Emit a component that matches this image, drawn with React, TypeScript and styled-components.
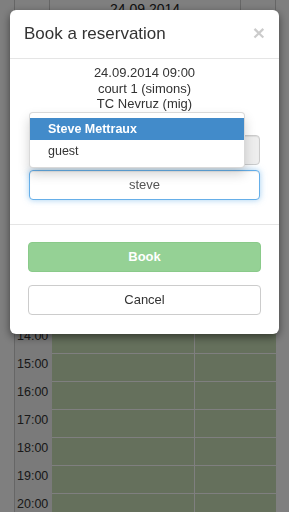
import React from 'react';
import styled, { createGlobalStyle } from 'styled-components';

const GlobalStyle = createGlobalStyle`
  html, body {
    margin: 0;
    padding: 0;
    background: #ffffff;
    font-family: "Liberation Sans", Arial, Helvetica, sans-serif;
    color: #333333;
  }
`;

const Page = styled.div`
  padding: 0 14px;
  height: 512px;
  overflow: hidden;
`;

const Schedule = styled.div`
  border-left: 1px solid #cccccc;
  width: 261px;
`;

const NavBar = styled.div`
  display: flex;
  height: 45px;
`;

const NavCell = styled.div<{ $width?: number; $muted?: boolean; $strong?: boolean }>`
  ${(p) => (p.$width ? `width: ${p.$width}px;` : 'flex: 1;')}
  border-right: 1px solid #cccccc;
  text-align: center;
  padding-top: 2px;
  font-size: 14px;
  line-height: 14px;
  color: ${(p) => (p.$muted ? '#bbbbbb' : '#222222')};
  font-weight: ${(p) => (p.$strong ? 'bold' : 'normal')};
`;

const CourtHead = styled.div`
  height: 56px;
`;

const Row = styled.div`
  display: grid;
  grid-template-columns: 37px 143px 1fr;
  height: 28px;
`;

const TimeCell = styled.div`
  background: #f4f4f4;
  font-size: 12.5px;
  line-height: 18px;
  padding: 2px 0 0 2px;
  color: #333333;
`;

const Slot = styled.div<{ $last?: boolean }>`
  background: #cae0b8;
  border-top: 1px solid #ffffff;
  ${(p) => (p.$last ? '' : 'border-right: 1px solid #ffffff;')}
`;

const Backdrop = styled.div`
  position: fixed;
  inset: 0;
  background: rgba(0, 0, 0, 0.5);
`;

const Modal = styled.div`
  position: fixed;
  top: 10px;
  left: 10px;
  right: 10px;
  background: #ffffff;
  border-radius: 6px;
  box-shadow: 0 3px 9px rgba(0, 0, 0, 0.5);
`;

const ModalHeader = styled.div`
  height: 48px;
  display: flex;
  align-items: center;
  justify-content: space-between;
  padding: 0 14px;
  border-bottom: 1px solid #e5e5e5;
`;

const Title = styled.h4`
  margin: 0;
  font-size: 17px;
  font-weight: normal;
  color: #333333;
  padding-bottom: 1px;
`;

const Close = styled.span`
  font-size: 21px;
  font-weight: bold;
  color: #000000;
  opacity: 0.2;
  line-height: 1;
  margin-bottom: 3px;
`;

const ModalBody = styled.div`
  padding: 6px 19px 24px;
`;

const Info = styled.div`
  text-align: center;
  font-size: 13px;
  line-height: 15.5px;
  color: #333333;
  margin-bottom: 23px;
`;

const Field = styled.div<{ $disabled?: boolean; $focus?: boolean }>`
  height: 30px;
  box-sizing: border-box;
  border: 1px solid ${(p) => (p.$focus ? '#66afe9' : '#cccccc')};
  border-radius: 4px;
  background: ${(p) => (p.$disabled ? '#eeeeee' : '#ffffff')};
  box-shadow: ${(p) =>
    p.$focus
      ? 'inset 0 1px 1px rgba(0,0,0,.075), 0 0 6px rgba(102,175,233,.6)'
      : 'inset 0 1px 1px rgba(0,0,0,.075)'};
  display: flex;
  align-items: center;
  justify-content: center;
  font-size: 13px;
  color: #555555;
`;

const Typeahead = styled.div`
  position: relative;
  margin-top: 5px;
`;

const Menu = styled.ul`
  position: absolute;
  left: 0;
  bottom: calc(100% + 2px);
  width: 216px;
  box-sizing: border-box;
  margin: 0;
  padding: 5px 0;
  list-style: none;
  background: #ffffff;
  border: 1px solid rgba(0, 0, 0, 0.15);
  border-radius: 4px;
  box-shadow: 0 6px 12px rgba(0, 0, 0, 0.175);
`;

const MenuItem = styled.li<{ $active?: boolean }>`
  height: 22px;
  line-height: 22px;
  padding: 0 18px;
  font-size: 12.5px;
  background: ${(p) => (p.$active ? '#428bca' : 'transparent')};
  color: ${(p) => (p.$active ? '#ffffff' : '#333333')};
  font-weight: ${(p) => (p.$active ? 'bold' : 'normal')};
`;

const ModalFooter = styled.div`
  border-top: 1px solid #e5e5e5;
  padding: 17px 18px 19px;
  display: flex;
  flex-direction: column;
  gap: 13px;
`;

const Button = styled.button<{ $primary?: boolean }>`
  height: 30px;
  border-radius: 4px;
  font-family: inherit;
  font-size: 13px;
  cursor: pointer;
  border: 1px solid ${(p) => (p.$primary ? '#4cae4c' : '#cccccc')};
  background: ${(p) => (p.$primary ? '#5cb85c' : '#ffffff')};
  color: ${(p) => (p.$primary ? '#ffffff' : '#333333')};
  font-weight: ${(p) => (p.$primary ? 'bold' : 'normal')};
  opacity: ${(p) => (p.$primary ? 0.65 : 1)};
`;

const hours = Array.from({ length: 15 }, (_, i) => `${String(i + 6).padStart(2, '0')}:00`);

const App = (): JSX.Element => (
  <>
    <GlobalStyle />
    <Page>
      <Schedule>
        <NavBar>
          <NavCell $width={34} $muted>
            ←
          </NavCell>
          <NavCell>24.09.2014</NavCell>
          <NavCell $width={34} $strong>
            →
          </NavCell>
        </NavBar>
        <CourtHead />
        {hours.map((h) => (
          <Row key={h}>
            <TimeCell>{h}</TimeCell>
            <Slot />
            <Slot $last />
          </Row>
        ))}
      </Schedule>
    </Page>
    <Backdrop />
    <Modal>
      <ModalHeader>
        <Title>Book a reservation</Title>
        <Close>×</Close>
      </ModalHeader>
      <ModalBody>
        <Info>
          <div>24.09.2014 09:00</div>
          <div>court 1 (simons)</div>
          <div>TC Nevruz (mig)</div>
        </Info>
        <Field $disabled />
        <Typeahead>
          <Menu>
            <MenuItem $active>Steve Mettraux</MenuItem>
            <MenuItem>guest</MenuItem>
          </Menu>
          <Field $focus>steve</Field>
        </Typeahead>
      </ModalBody>
      <ModalFooter>
        <Button $primary>Book</Button>
        <Button>Cancel</Button>
      </ModalFooter>
    </Modal>
  </>
);

export default App;
